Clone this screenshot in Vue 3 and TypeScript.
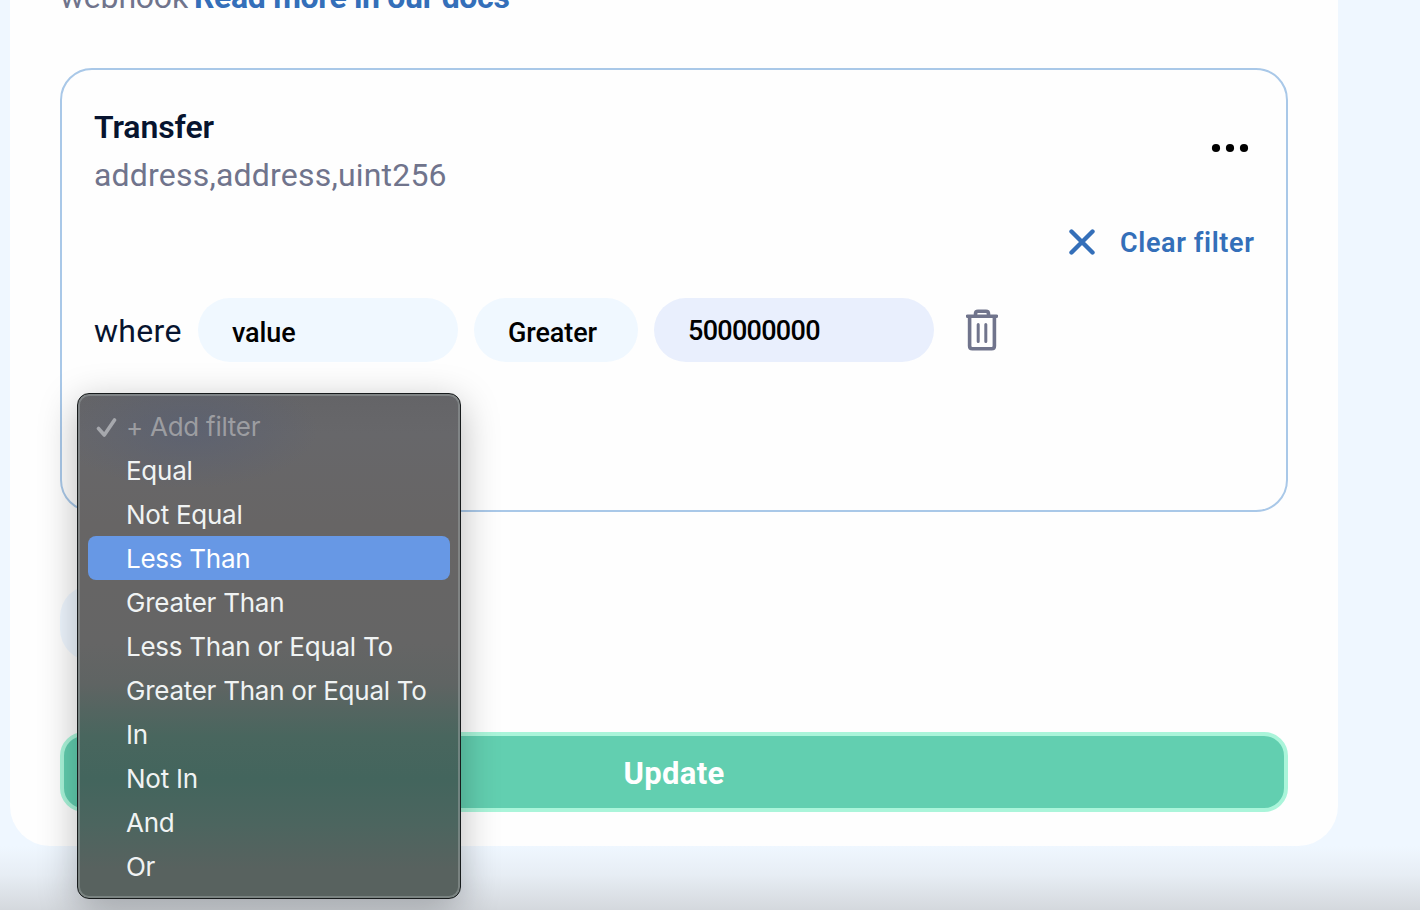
<script setup lang="ts">
const options: string[] = [
  'Equal',
  'Not Equal',
  'Less Than',
  'Greater Than',
  'Less Than or Equal To',
  'Greater Than or Equal To',
  'In',
  'Not In',
  'And',
  'Or',
]
const highlighted = 'Less Than'
</script>

<template>
  <div class="page">
    <main class="panel">
      <p class="intro"><span class="plain">webhook</span><a class="docs">Read more in our docs</a></p>
      <section class="card">
        <header class="head">
          <div>
            <h2 class="title">Transfer</h2>
            <p class="signature">address,address,uint256</p>
          </div>
          <svg class="dots" width="38" height="10" viewBox="0 0 38 10">
            <circle cx="5" cy="5" r="4.1" /><circle cx="19" cy="5" r="4.1" /><circle cx="33" cy="5" r="4.1" />
          </svg>
        </header>
        <div class="clear">
          <svg width="26" height="26" viewBox="0 0 26 26"><path d="M2.5 2.5 23.5 23.5M23.5 2.5 2.5 23.5" /></svg>
          <span>Clear filter</span>
        </div>
        <div class="filter">
          <span class="where">where</span>
          <div class="pill field"><span>value</span></div>
          <div class="pill operator"><span>Greater</span></div>
          <div class="pill amount"><span>500000000</span></div>
          <svg class="trash" width="32" height="42" viewBox="0 0 32 42">
            <path d="M1.5 7.2H30.5M9.5 7V4.8Q9.5 2.3 12 2.3H20Q22.5 2.3 22.5 4.8V7M3.6 8V37Q3.6 39.8 6.4 39.8H25.6Q28.4 39.8 28.4 37V8" />
            <path class="thin" d="M12.2 15.5V32.5M19.8 15.5V32.5" />
          </svg>
        </div>
      </section>
      <div class="add"></div>
      <button class="update"><span>Update</span></button>
    </main>
    <div class="fade"></div>
    <div class="menu">
      <div class="item disabled">
        <svg class="check" width="22" height="22" viewBox="0 0 22 22"><path d="M2.5 12.5 8.3 19 18.5 4" /></svg>
        <span>+ Add filter</span>
      </div>
      <div v-for="o in options" :key="o" class="item" :class="{ active: o === highlighted }">
        <span>{{ o }}</span>
      </div>
    </div>
  </div>
</template>

<style>
body { margin: 0; overflow: hidden; }
</style>

<style scoped>
* { box-sizing: border-box; }
.page {
  position: relative;
  width: 1420px;
  height: 910px;
  overflow: hidden;
  background: #eff7ff;
  font-family: Roboto, "Liberation Sans", sans-serif;
}
.panel {
  display: flex;
  flex-direction: column;
  width: 1328px;
  height: 846px;
  margin-left: 10px;
  padding: 0 50px;
  background: #fefefe;
  border-radius: 0 0 40px 40px;
}
.intro {
  display: flex;
  gap: 6px;
  height: 40px;
  margin: -23px 0 0;
  font-size: 32px;
  line-height: 40px;
  white-space: nowrap;
  color: #70748c;
}
.plain { letter-spacing: -0.2px; }
.docs { color: #346fb9; font-weight: 700; letter-spacing: -0.33px; }
.card {
  width: 1228px;
  height: 444px;
  margin-top: 51px;
  padding: 35px 32px 0;
  border: 2px solid #a9c8e8;
  border-radius: 32px;
}
.head { display: flex; justify-content: space-between; height: 96px; }
.title {
  margin: 0;
  font-size: 32px;
  line-height: 44px;
  font-weight: 600;
  letter-spacing: -0.1px;
  color: #07142f;
}
.signature {
  margin: 4px 0 0;
  font-size: 32px;
  line-height: 44px;
  letter-spacing: 0.2px;
  color: #70748c;
}
.dots { margin: 38px 5px 0 0; fill: #000; }
.clear {
  display: flex;
  align-items: center;
  justify-content: flex-end;
  gap: 25px;
  height: 40px;
  margin-top: 21px;
  color: #346fb9;
  font-size: 27px;
  font-weight: 600;
}
.clear span { width: 134px; padding-top: 1px; white-space: nowrap; letter-spacing: 0.62px; }
.clear svg { fill: none; stroke: #346fb9; stroke-width: 4.4; stroke-linecap: round; }
.filter { display: flex; align-items: center; height: 64px; margin-top: 36px; }
.where { width: 104px; padding-top: 2px; font-size: 32px; line-height: 44px; letter-spacing: 0.3px; color: #07142f; }
.pill {
  display: flex;
  align-items: center;
  height: 64px;
  padding-left: 34px;
  margin-right: 16px;
  border-radius: 32px;
  background: #f0f8ff;
  color: #000;
  font-size: 27px;
  font-weight: 500;
  letter-spacing: -0.1px;
}
.field { width: 260px; padding-top: 5px; }
.operator { width: 164px; padding-top: 5px; }
.amount { width: 280px; padding-top: 2px; background: #e9effd; letter-spacing: -0.7px; }
.trash { margin-left: 16px; fill: none; stroke: #70748c; stroke-width: 3.6; stroke-linecap: round; }
.thin { stroke-width: 3; }
.add {
  width: 240px;
  height: 76px;
  margin-top: 73px;
  border-radius: 32px;
  background: #eff7ff;
}
.update {
  width: 1228px;
  height: 80px;
  margin-top: 71px;
  padding: 2px 0 0;
  border: 4px solid #aaf5da;
  border-radius: 24px;
  background: #62cfb0;
  color: #fff;
  font-family: inherit;
  font-size: 31px;
  font-weight: 700;
  letter-spacing: 0.3px;
}
.fade {
  position: absolute;
  left: 0;
  right: 0;
  bottom: 0;
  height: 64px;
  background: linear-gradient(rgba(210, 213, 217, 0), rgba(216, 219, 224, 0.35) 45%, #d4d8dd);
}
.menu {
  position: absolute;
  left: 77px;
  top: 393px;
  width: 384px;
  height: 506px;
  padding: 10px 10px 9px;
  border: 1px solid #171b1c;
  border-radius: 12px;
  background:
    radial-gradient(ellipse 130px 60px at 110px 35px, rgba(85, 94, 118, 0.55), transparent),
    linear-gradient(#646467 0, #67676a 40px, #676565 130px, #656565 250px, #5f6463 290px, #49665e 342px, #43655d 385px, #4c655f 430px, #58625f 475px, #58625f);
  box-shadow: inset 0 0 0 2px rgba(155, 163, 163, 0.5), 0 10px 38px rgba(0, 0, 0, 0.28);
  font-family: Inter, "Liberation Sans", sans-serif;
  font-size: 26px;
  letter-spacing: -0.26px;
}
.item {
  display: flex;
  align-items: center;
  height: 44px;
  padding: 1px 0 0 38px;
  border-radius: 8px;
  color: #f0f3f3;
  white-space: nowrap;
}
.active { background: #6798e5; color: #fff; }
.disabled { padding-left: 8px; color: #9c9da1; }
.check { width: 22px; margin-right: 8px; fill: none; stroke: #a6a8ad; stroke-width: 3.6; stroke-linecap: round; stroke-linejoin: round; }
</style>
